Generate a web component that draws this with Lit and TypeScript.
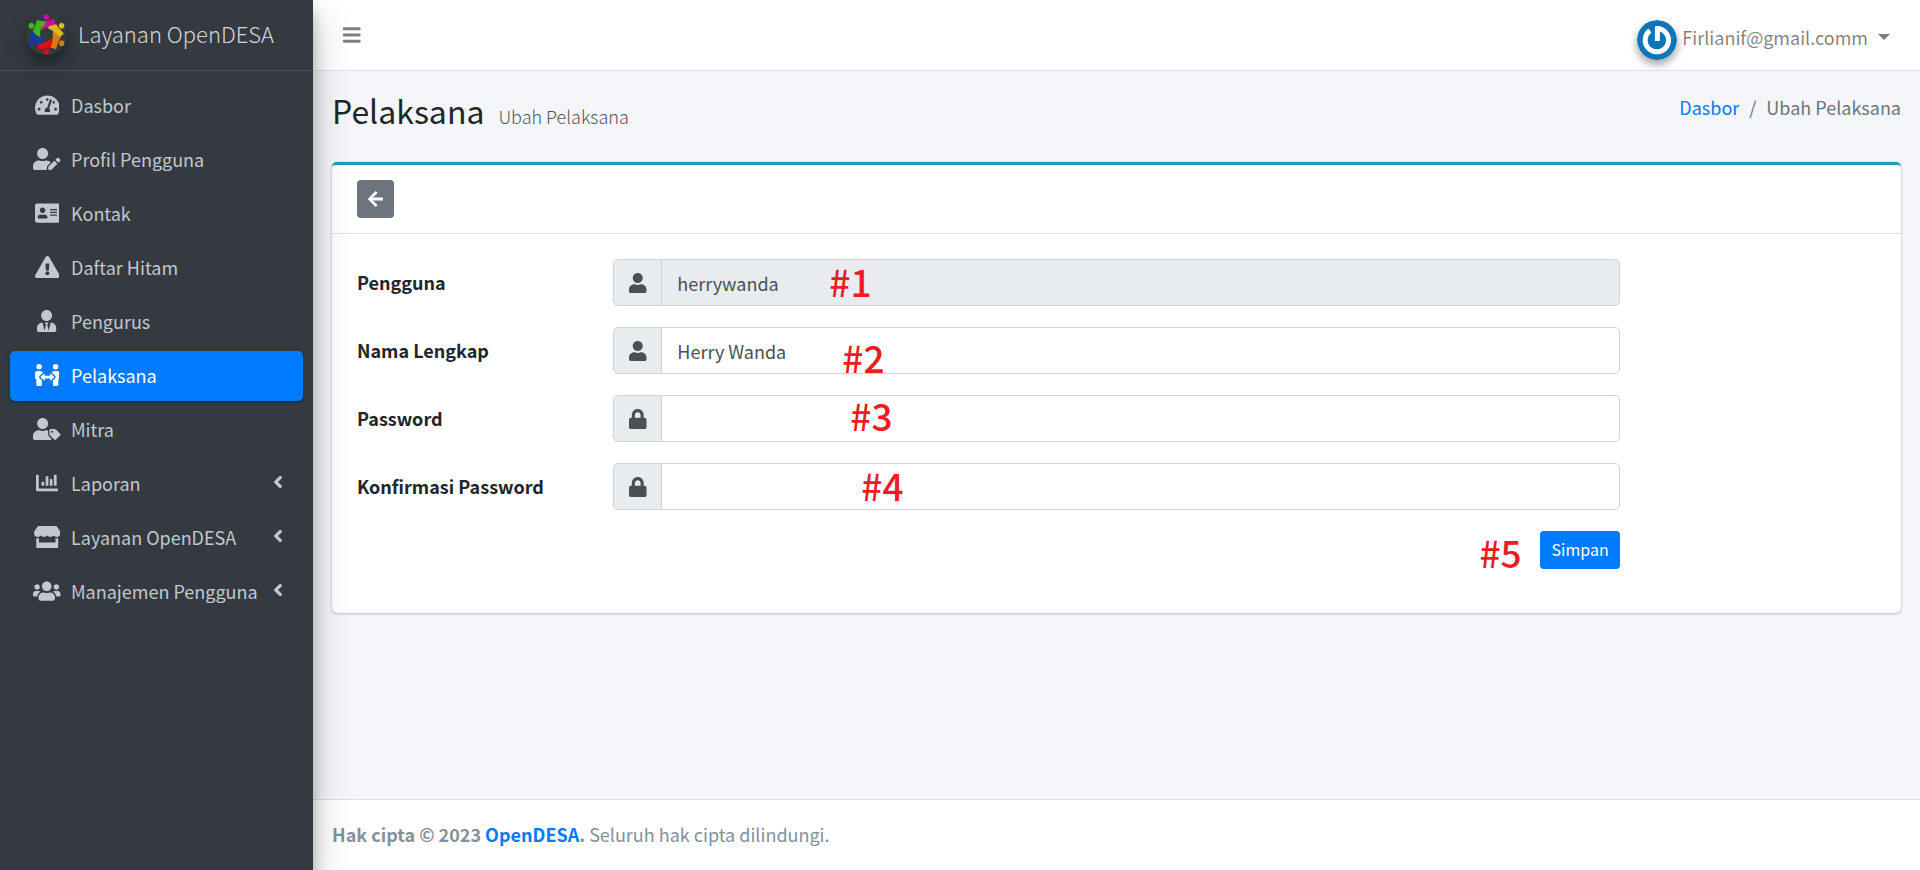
import { LitElement, html, css, svg, nothing } from "lit";
import { customElement, property, state } from "lit/decorators.js";
import { classMap } from "lit/directives/class-map.js";

const ICONS: Record<string, [number, string]> = {
  gauge: [576, "M288 32C128.94 32 0 160.94 0 320c0 52.8 14.25 102.26 39.06 144.8 5.61 9.62 16.3 15.2 27.44 15.2h443c11.14 0 21.83-5.58 27.44-15.2C561.75 422.26 576 372.8 576 320c0-159.06-128.94-288-288-288zm0 64c14.71 0 26.58 10.13 30.32 23.65-1.11 2.26-2.64 4.23-3.45 6.67l-9.22 27.67c-5.13 3.49-10.97 6.01-17.64 6.01-17.67 0-32-14.33-32-32S270.33 96 288 96zM96 384c-17.67 0-32-14.33-32-32s14.33-32 32-32 32 14.33 32 32-14.33 32-32 32zm48-160c-17.67 0-32-14.33-32-32s14.33-32 32-32 32 14.33 32 32-14.33 32-32 32zm246.77-72.41l-61.33 184C343.13 347.33 352 364.54 352 384c0 11.72-3.38 22.55-8.88 32H232.88c-5.5-9.45-8.88-20.28-8.88-32 0-33.94 26.5-61.43 59.9-63.59l61.34-184.01c4.17-12.56 17.73-19.45 30.36-15.17 12.57 4.19 19.35 17.79 15.17 30.36zm14.66 57.2l15.52-46.55c3.47-1.29 7.13-2.23 11.05-2.23 17.67 0 32 14.33 32 32s-14.33 32-32 32c-11.38-.01-21.25-6.1-26.57-15.22zM480 384c-17.67 0-32-14.33-32-32s14.33-32 32-32 32 14.33 32 32-14.33 32-32 32z"],
  userEdit: [640, "M224 256c70.7 0 128-57.3 128-128S294.7 0 224 0 96 57.3 96 128s57.3 128 128 128zm89.6 32h-16.7c-22.2 10.2-46.9 16-72.9 16s-50.6-5.8-72.9-16h-16.7C60.2 288 0 348.2 0 422.4V464c0 26.5 21.5 48 48 48h274.9c-2.4-6.8-3.4-14-2.6-21.3l6.8-60.9 1.2-11.1 7.9-7.9 77.3-77.3c-24.5-27.7-60-45.5-99.9-45.5zm45.3 145.3l-6.8 61c-1.1 10.2 7.5 18.8 17.6 17.6l60.9-6.8 137.9-137.9-71.7-71.7-137.9 137.8zM633 268.9L595.1 231c-9.3-9.3-24.5-9.3-33.8 0l-37.8 37.8-4.1 4.1 71.8 71.7 41.8-41.8c9.3-9.4 9.3-24.5 0-33.9z"],
  card: [576, "M528 32H48C21.5 32 0 53.5 0 80v352c0 26.5 21.5 48 48 48h480c26.5 0 48-21.5 48-48V80c0-26.5-21.5-48-48-48zm-352 96c35.3 0 64 28.7 64 64s-28.7 64-64 64-64-28.7-64-64 28.7-64 64-64zm112 236.8c0 10.6-10 19.2-22.4 19.2H86.4C74 384 64 375.4 64 364.8v-19.2c0-31.8 30.1-57.6 67.2-57.6h5c12.3 5.1 25.7 8 39.8 8s27.6-2.9 39.8-8h5c37.1 0 67.2 25.8 67.2 57.6v19.2zM512 312c0 4.4-3.6 8-8 8H360c-4.4 0-8-3.6-8-8v-16c0-4.4 3.6-8 8-8h144c4.4 0 8 3.6 8 8v16zm0-64c0 4.4-3.6 8-8 8H360c-4.4 0-8-3.6-8-8v-16c0-4.4 3.6-8 8-8h144c4.4 0 8 3.6 8 8v16zm0-64c0 4.4-3.6 8-8 8H360c-4.4 0-8-3.6-8-8v-16c0-4.4 3.6-8 8-8h144c4.4 0 8 3.6 8 8v16z"],
  warning: [576, "M569.517 440.013C587.975 472.007 564.806 512 527.94 512H48.054c-36.937 0-59.999-40.055-41.577-71.987L246.423 23.985c18.467-32.009 64.72-31.951 83.154 0l239.94 416.028zM288 354c-25.405 0-46 20.595-46 46s20.595 46 46 46 46-20.595 46-46-20.595-46-46-46zm-43.673-165.346l7.418 136c.347 6.364 5.609 11.346 11.982 11.346h48.546c6.373 0 11.635-4.982 11.982-11.346l7.418-136c.375-6.874-5.098-12.654-11.982-12.654h-63.383c-6.884 0-12.356 5.78-11.981 12.654z"],
  userTie: [448, "M224 256c70.7 0 128-57.3 128-128S294.7 0 224 0 96 57.3 96 128s57.3 128 128 128zm95.8 32.6L272 480l-32-136 32-56h-96l32 56-32 136-47.8-191.4C56.9 292 0 350.3 0 422.4V464c0 26.5 21.5 48 48 48h352c26.5 0 48-21.5 48-48v-41.6c0-72.1-56.9-130.4-128.2-133.8z"],
  peopleArrows: [576, "M96,128A64,64,0,1,0,32,64,64,64,0,0,0,96,128Zm0,176.08a44.11,44.11,0,0,1,13.64-32L181.77,204c1.65-1.55,3.77-2.31,5.61-3.57A63.91,63.91,0,0,0,128,160H64A64,64,0,0,0,0,224v96a32,32,0,0,0,32,32V480a32,32,0,0,0,32,32h64a32,32,0,0,0,32-32V383.61l-50.36-47.53A44.08,44.08,0,0,1,96,304.08ZM480,128a64,64,0,1,0-64-64A64,64,0,0,0,480,128Zm32,32H448a63.91,63.91,0,0,0-59.38,40.42c1.84,1.27,4,2,5.62,3.59l72.12,68.06a44.37,44.37,0,0,1,0,64L416,383.62V480a32,32,0,0,0,32,32h64a32,32,0,0,0,32-32V352a32,32,0,0,0,32-32V224A64,64,0,0,0,512,160ZM444.4,295.34l-72.12-68.06A12,12,0,0,0,352,236v36H224V236a12,12,0,0,0-20.28-8.73L131.6,295.34a12.4,12.4,0,0,0,0,17.47l72.12,68.07A12,12,0,0,0,224,372.14V336H352v36.14a12,12,0,0,0,20.28,8.74l72.12-68.07A12.4,12.4,0,0,0,444.4,295.34Z"],
  userTag: [640, "M630.6 364.9l-90.3-90.2c-12-12-28.3-18.7-45.3-18.7h-79.3c-17.7 0-32 14.3-32 32v79.2c0 17 6.7 33.2 18.7 45.2l90.3 90.2c12.5 12.5 32.8 12.5 45.3 0l92.5-92.5c12.6-12.5 12.6-32.7.1-45.2zm-182.8-21c-13.3 0-24-10.7-24-24s10.7-24 24-24 24 10.7 24 24c0 13.2-10.7 24-24 24zm-223.8-88c70.7 0 128-57.3 128-128C352 57.3 294.7 0 224 0S96 57.3 96 128c0 70.6 57.3 127.9 128 127.9zm127.8 111.2V294c-12.2-3.6-24.9-6.2-38.2-6.2h-16.7c-22.2 10.2-46.9 16-72.9 16s-50.6-5.8-72.9-16h-16.7C60.2 287.9 0 348.1 0 422.3V464c0 26.5 21.5 48 48 48h352c15.5 0 29.1-7.5 37.9-18.9l-58-58c-18.1-18.1-28.1-42.2-28.1-68z"],
  chart: [512, "M332.8 320h38.4c6.4 0 12.8-6.4 12.8-12.8V172.8c0-6.4-6.4-12.8-12.8-12.8h-38.4c-6.4 0-12.8 6.4-12.8 12.8v134.4c0 6.4 6.4 12.8 12.8 12.8zm96 0h38.4c6.4 0 12.8-6.4 12.8-12.8V76.8c0-6.4-6.4-12.8-12.8-12.8h-38.4c-6.4 0-12.8 6.4-12.8 12.8v230.4c0 6.4 6.4 12.8 12.8 12.8zm-288 0h38.4c6.4 0 12.8-6.4 12.8-12.8v-70.4c0-6.4-6.4-12.8-12.8-12.8h-38.4c-6.4 0-12.8 6.4-12.8 12.8v70.4c0 6.4 6.4 12.8 12.8 12.8zm96 0h38.4c6.4 0 12.8-6.4 12.8-12.8V108.8c0-6.4-6.4-12.8-12.8-12.8h-38.4c-6.4 0-12.8 6.4-12.8 12.8v198.4c0 6.4 6.4 12.8 12.8 12.8zM496 384H64V80c0-8.84-7.16-16-16-16H16C7.16 64 0 71.16 0 80v336c0 17.67 14.33 32 32 32h464c8.84 0 16-7.16 16-16v-32c0-8.84-7.16-16-16-16z"],
  store: [616, "M602 118.6L537.1 15C531.3 5.7 521 0 510 0H106C95 0 84.7 5.7 78.9 15L14 118.6c-33.5 53.5-3.8 127.9 58.8 136.4 4.5.6 9.1.9 13.7.9 29.6 0 55.8-13 73.8-33.1 18 20.1 44.3 33.1 73.8 33.1 29.6 0 55.8-13 73.8-33.1 18 20.1 44.3 33.1 73.8 33.1 29.6 0 55.8-13 73.8-33.1 18.1 20.1 44.3 33.1 73.8 33.1 4.7 0 9.2-.3 13.7-.9 62.8-8.4 92.6-82.8 59-136.4zM529.5 288c-10 0-19.9-1.5-29.5-3.8V384H116v-99.8c-9.6 2.2-19.5 3.8-29.5 3.8-6 0-12.1-.4-18-1.2-5.6-.8-11.1-2.1-16.4-3.6V480c0 17.7 14.3 32 32 32h448c17.7 0 32-14.3 32-32V283.2c-5.4 1.6-10.8 2.9-16.4 3.6-6.1.8-12.1 1.2-18.2 1.2z"],
  users: [640, "M96 224c35.3 0 64-28.7 64-64s-28.7-64-64-64-64 28.7-64 64 28.7 64 64 64zm448 0c35.3 0 64-28.7 64-64s-28.7-64-64-64-64 28.7-64 64 28.7 64 64 64zm32 32h-64c-17.6 0-33.5 7.1-45.1 18.6 40.3 22.1 68.9 62 75.1 109.4h66c17.7 0 32-14.3 32-32v-32c0-35.3-28.7-64-64-64zm-256 0c61.9 0 112-50.1 112-112S381.9 32 320 32 208 82.1 208 144s50.1 112 112 112zm76.8 32h-8.3c-20.8 10-43.9 16-68.5 16s-47.6-6-68.5-16h-8.3C179.6 288 128 339.6 128 403.2V432c0 26.5 21.5 48 48 48h288c26.5 0 48-21.5 48-48v-28.8c0-63.6-51.6-115.2-115.2-115.2zm-223.7-13.4C161.5 263.1 145.6 256 128 256H64c-35.3 0-64 28.7-64 64v32c0 17.7 14.3 32 32 32h65.9c6.3-47.4 34.9-87.3 75.2-109.4z"],
  angleLeft: [256, "M31.7 239l136-136c9.4-9.4 24.6-9.4 33.9 0l22.6 22.6c9.4 9.4 9.4 24.6 0 33.9L127.9 256l96.4 96.4c9.4 9.4 9.4 24.6 0 33.9L201.7 409c-9.4 9.4-24.6 9.4-33.9 0l-136-136c-9.5-9.4-9.5-24.6-.1-34z"],
  user: [448, "M224 256c70.7 0 128-57.3 128-128S294.7 0 224 0 96 57.3 96 128s57.3 128 128 128zm89.6 32h-16.7c-22.2 10.2-46.9 16-72.9 16s-50.6-5.8-72.9-16h-16.7C60.2 288 0 348.2 0 422.4V464c0 26.5 21.5 48 48 48h352c26.5 0 48-21.5 48-48v-41.6c0-74.2-60.2-134.4-134.4-134.4z"],
  lock: [448, "M400 224h-24v-72C376 68.2 307.8 0 224 0S72 68.2 72 152v72H48c-26.5 0-48 21.5-48 48v192c0 26.5 21.5 48 48 48h352c26.5 0 48-21.5 48-48V272c0-26.5-21.5-48-48-48zm-104 0H152v-72c0-39.7 32.3-72 72-72s72 32.3 72 72v72z"],
  bars: [448, "M16 132h416c8.837 0 16-7.163 16-16V76c0-8.837-7.163-16-16-16H16C7.163 60 0 67.163 0 76v40c0 8.837 7.163 16 16 16zm0 160h416c8.837 0 16-7.163 16-16v-40c0-8.837-7.163-16-16-16H16c-8.837 0-16 7.163-16 16v40c0 8.837 7.163 16 16 16zm0 160h416c8.837 0 16-7.163 16-16v-40c0-8.837-7.163-16-16-16H16c-8.837 0-16 7.163-16 16v40c0 8.837 7.163 16 16 16z"],
  arrowLeft: [448, "M257.5 445.1l-22.2 22.2c-9.4 9.4-24.6 9.4-33.9 0L7 273c-9.4-9.4-9.4-24.6 0-33.9L201.4 44.7c9.4-9.4 24.6-9.4 33.9 0l22.2 22.2c9.5 9.5 9.3 25-.4 34.3L136.6 216H424c13.3 0 24 10.7 24 24v32c0 13.3-10.7 24-24 24H136.6l120.5 114.8c9.8 9.3 10 24.8.4 34.3z"],
};

@customElement("fa-icon")
class FaIcon extends LitElement {
  @property() name = "user";
  static styles = css`
    :host { display: inline-flex; height: 20px; }
    svg { display: block; height: 100%; fill: currentColor; }
  `;
  render() {
    const [w, d] = ICONS[this.name];
    return html`<svg viewBox="0 0 ${w} 512" aria-hidden="true"><path d=${d}></path></svg>`;
  }
}

interface NavItem { icon: string; label: string; parent?: boolean; }

const NAV: NavItem[] = [
  { icon: "gauge", label: "Dasbor" },
  { icon: "userEdit", label: "Profil Pengguna" },
  { icon: "card", label: "Kontak" },
  { icon: "warning", label: "Daftar Hitam" },
  { icon: "userTie", label: "Pengurus" },
  { icon: "peopleArrows", label: "Pelaksana" },
  { icon: "userTag", label: "Mitra" },
  { icon: "chart", label: "Laporan", parent: true },
  { icon: "store", label: "Layanan OpenDESA", parent: true },
  { icon: "users", label: "Manajemen Pengguna", parent: true },
];

const FIELDS = [
  { id: "username", label: "Pengguna", icon: "user", type: "text", value: "herrywanda", locked: true, mark: "#1" },
  { id: "fullname", label: "Nama Lengkap", icon: "user", type: "text", value: "Herry Wanda", locked: false, mark: "#2" },
  { id: "password", label: "Password", icon: "lock", type: "password", value: "", locked: false, mark: "#3" },
  { id: "confirm", label: "Konfirmasi Password", icon: "lock", type: "password", value: "", locked: false, mark: "#4" },
];

const FIGURES = ["#c9128b", "#dcb816", "#dd7a12", "#dc1010", "#123aa8", "#41b51c"];

@customElement("app-root")
class AppRoot extends LitElement {
  @state() private current = "Pelaksana";

  static styles = css`
    :host {
      display: block;
      font-family: "Noto Sans CJK SC", "Noto Sans", sans-serif;
      font-size: 18px;
      line-height: 30px;
      color: #212529;
    }
    * { box-sizing: border-box; }
    a { color: #007bff; text-decoration: none; }
    .shell {
      display: grid;
      grid-template-columns: 313px minmax(0, 1fr);
      min-height: 100vh;
      background: #f4f6f9;
    }
    .sidebar {
      z-index: 2;
      background: #343a40;
      box-shadow: 0 18px 35px rgba(0, 0, 0, 0.25), 0 12px 12px rgba(0, 0, 0, 0.22);
    }
    .brand {
      display: flex;
      align-items: center;
      gap: 11px;
      height: 71px;
      padding: 0 26px 2px;
      border-bottom: 1px solid #4b545c;
      color: rgba(255, 255, 255, 0.8);
      font-size: 22px;
      font-weight: 300;
      white-space: nowrap;
    }
    .brand span, .link span { padding-bottom: 2px; }
    .logo {
      flex: none;
      width: 41px;
      height: 41px;
      border-radius: 50%;
      box-shadow: 0 12px 25px rgba(0, 0, 0, 0.19), 0 8px 8px rgba(0, 0, 0, 0.23);
    }
    .nav {
      display: flex;
      flex-direction: column;
      gap: 4px;
      margin: 0;
      padding: 10px;
      list-style: none;
    }
    .link {
      display: flex;
      align-items: center;
      gap: 7px;
      height: 50px;
      padding: 0 20px;
      border-radius: 5px;
      color: #c2c7d0;
      white-space: nowrap;
    }
    .link.active {
      background: #007bff;
      color: #fff;
      box-shadow: 0 1px 4px rgba(0, 0, 0, 0.12), 0 1px 2px rgba(0, 0, 0, 0.24);
    }
    .glyph { display: flex; justify-content: center; width: 34px; }
    .glyph fa-icon { height: 22px; }
    .chevron { margin: 0 0 4px auto; }
    .page { display: flex; flex-direction: column; }
    .topbar {
      display: flex;
      align-items: center;
      justify-content: space-between;
      height: 71px;
      padding: 0 30px;
      border-bottom: 1px solid #dee2e6;
      background: #fff;
      color: rgba(0, 0, 0, 0.5);
    }
    button { font: inherit; cursor: pointer; border: 0; }
    .toggle { display: flex; padding: 0; background: none; color: inherit; }
    .account {
      display: flex;
      align-items: center;
      gap: 5px;
      padding: 10px 0 0;
      background: none;
      color: inherit;
    }
    .email { padding-bottom: 6px; }
    .avatar {
      width: 40px;
      height: 40px;
      border-radius: 50%;
      box-shadow: 0 4px 8px rgba(0, 0, 0, 0.2), 0 4px 8px rgba(0, 0, 0, 0.22);
    }
    .caret {
      margin: 0 0 6px 5px;
      border: 6px solid transparent;
      border-top-color: currentColor;
      border-bottom: 0;
    }
    .heading {
      display: flex;
      justify-content: space-between;
      padding: 17px 19px 24px;
    }
    h1 {
      display: flex;
      align-items: baseline;
      gap: 14px;
      margin: 0;
      font-size: 32px;
      line-height: 44px;
      font-weight: 400;
    }
    h1 small { color: #50565c; font-size: 18px; font-weight: 300; }
    .crumbs {
      display: flex;
      gap: 10px;
      margin: 0;
      padding: 4px 0 0;
      list-style: none;
      color: #6c757d;
    }
    .card {
      margin: 0 19px;
      border-top: 3px solid #17a2b8;
      border-radius: 5px;
      background: #fff;
      box-shadow: 0 0 1px rgba(0, 0, 0, 0.25), 0 1px 3px rgba(0, 0, 0, 0.2);
    }
    .card-head { padding: 15px 25px; border-bottom: 1px solid #dfdfdf; }
    .back {
      display: flex;
      align-items: center;
      justify-content: center;
      width: 37px;
      height: 38px;
      border-radius: 4px;
      background: #6c757d;
      color: #fff;
    }
    .back fa-icon { height: 18px; }
    form {
      display: grid;
      grid-template-columns: repeat(12, minmax(0, 1fr));
      gap: 21px 19px;
      padding: 25px 25px 44px;
    }
    label { grid-column: 1 / span 2; padding-top: 8px; font-weight: 700; white-space: nowrap; }
    .group {
      grid-column: 3 / span 8;
      position: relative;
      display: flex;
      height: 47px;
    }
    .addon {
      display: flex;
      align-items: center;
      justify-content: center;
      width: 49px;
      border: 1px solid #ced4da;
      border-radius: 5px 0 0 5px;
      background: #e9ecef;
      color: #495057;
    }
    input {
      flex: 1;
      min-width: 0;
      padding: 0 15px;
      border: 1px solid #ced4da;
      border-left: 0;
      border-radius: 0 5px 5px 0;
      background: #fff;
      color: #495057;
      font: inherit;
    }
    input:disabled { background: #e9ecef; opacity: 1; }
    .mark {
      position: absolute;
      color: #ed1c24;
      font-size: 37px;
      font-weight: 500;
      line-height: 44px;
    }
    .m1 { left: 216px; top: 0; }
    .m2 { left: 229px; top: 8px; }
    .m3 { left: 237px; top: -2px; }
    .m4 { left: 248px; top: 0; }
    .m5 { right: 98px; top: -1px; }
    .actions {
      grid-column: 3 / span 8;
      position: relative;
      display: flex;
      justify-content: flex-end;
    }
    .save {
      height: 38px;
      padding: 0 11px 2px;
      border-radius: 4px;
      background: #007bff;
      color: #fff;
      font-size: 16px;
    }
    .footer {
      margin-top: auto;
      height: 71px;
      padding: 19px;
      border-top: 1px solid #dee2e6;
      background: #fff;
      color: #869099;
    }
  `;

  private logo() {
    return html`<svg class="logo" viewBox="0 0 41 41" role="img" aria-label="OpenDESA">
      ${FIGURES.map(
        (c, i) => svg`<g transform=${`rotate(${i * 60} 20.5 20.5)`} fill=${c}>
          <circle cx="20.5" cy="3" r="2.8"></circle>
          <path d="M16.4 7L22 6.4L28.6 5L29 8.4L31.4 12.4L27.4 14.4L24.6 12.8L20.6 13.2L15.2 16.4L14.6 13Z"></path>
        </g>`
      )}
    </svg>`;
  }

  private avatar() {
    return html`<svg class="avatar" viewBox="0 0 40 40" aria-hidden="true">
      <circle cx="20" cy="20" r="20" fill="#0f74b8"></circle>
      <g fill="none" stroke="#fff" stroke-width="5">
        <path d="M13 10.6A11.7 11.7 0 1 0 20.4 8.4" stroke-linejoin="round"></path>
        <path d="M20.4 6V21"></path>
      </g>
    </svg>`;
  }

  private navItem(n: NavItem) {
    const active = n.label === this.current;
    return html`<li>
      <a class=${classMap({ link: true, active })} href="#" aria-current=${active ? "page" : nothing}
        @click=${(e: Event) => { e.preventDefault(); this.current = n.label; }}>
        <span class="glyph"><fa-icon name=${n.icon}></fa-icon></span>
        <span>${n.label}</span>
        ${n.parent ? html`<fa-icon class="chevron" name="angleLeft"></fa-icon>` : nothing}
      </a>
    </li>`;
  }

  render() {
    return html`
      <div class="shell">
        <aside class="sidebar">
          <a class="brand" href="#">${this.logo()}<span>Layanan OpenDESA</span></a>
          <nav><ul class="nav">${NAV.map((n) => this.navItem(n))}</ul></nav>
        </aside>
        <div class="page">
          <header class="topbar">
            <button class="toggle" type="button" aria-label="Menu"><fa-icon name="bars"></fa-icon></button>
            <button class="account" type="button">
              ${this.avatar()}<span class="email">Firlianif@gmail.comm</span><span class="caret"></span>
            </button>
          </header>
          <main>
            <div class="heading">
              <h1>Pelaksana <small>Ubah Pelaksana</small></h1>
              <ol class="crumbs">
                <li><a href="#">Dasbor</a></li>
                <li aria-hidden="true">/</li>
                <li>Ubah Pelaksana</li>
              </ol>
            </div>
            <section class="card">
              <div class="card-head">
                <button class="back" type="button" aria-label="Kembali"><fa-icon name="arrowLeft"></fa-icon></button>
              </div>
              <form @submit=${(e: Event) => e.preventDefault()}>
                ${FIELDS.map(
                  (f, i) => html`
                    <label for=${f.id}>${f.label}</label>
                    <div class="group">
                      <span class="addon"><fa-icon name=${f.icon}></fa-icon></span>
                      <input id=${f.id} type=${f.type} .value=${f.value} ?disabled=${f.locked} autocomplete="off" />
                      <span class="mark m${i + 1}">${f.mark}</span>
                    </div>`
                )}
                <div class="actions">
                  <span class="mark m5">#5</span>
                  <button class="save" type="submit">Simpan</button>
                </div>
              </form>
            </section>
          </main>
          <footer class="footer">
            <strong>Hak cipta © 2023 <a href="#">OpenDESA</a>.</strong> Seluruh hak cipta dilindungi.
          </footer>
        </div>
      </div>
    `;
  }
}
